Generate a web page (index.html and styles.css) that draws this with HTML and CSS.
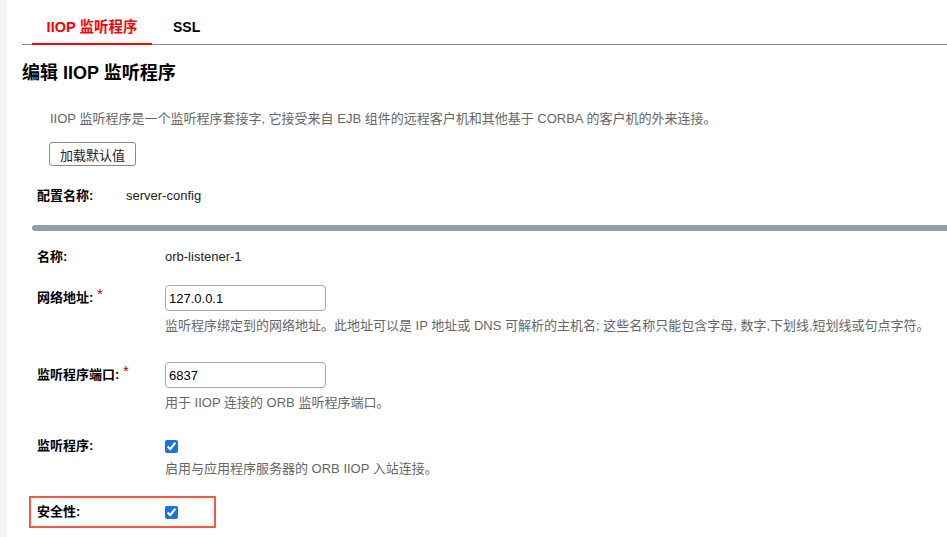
FILE: index.html
```html
<!DOCTYPE html>
<html lang="zh-CN">
<head>
    <meta charset="UTF-8">
    <meta name="viewport" content="width=device-width, initial-scale=1.0">
    <title>编辑 IIOP 监听程序</title>
    <link rel="stylesheet" href="styles.css">
</head>
<body>
    <div class="tabs">
        <span class="tab activo">IIOP 监听程序</span>
        <span class="tab">SSL</span>
    </div>

    <h1>编辑 IIOP 监听程序</h1>

    <p class="descripcion">IIOP 监听程序是一个监听程序套接字, 它接受来自 EJB 组件的远程客户机和其他基于 CORBA 的客户机的外来连接。</p>
    <button type="button" class="btn">加载默认值</button>

    <div class="config">
        <span class="etiqueta-config">配置名称:</span>
        <span>server-config</span>
    </div>

    <div class="barra"></div>

    <form class="formulario">
        <div class="fila fila-texto">
            <label>名称:</label>
            <span class="valor">orb-listener-1</span>
        </div>

        <div class="fila fila-campo">
            <label for="direccion">网络地址: <span class="req">*</span></label>
            <div class="valor">
                <input type="text" id="direccion" value="127.0.0.1">
                <div class="ayuda">监听程序绑定到的网络地址。此地址可以是 IP 地址或 DNS 可解析的主机名; 这些名称只能包含字母, 数字,下划线,短划线或句点字符。</div>
            </div>
        </div>

        <div class="fila fila-campo puerto">
            <label for="puerto">监听程序端口: <span class="req">*</span></label>
            <div class="valor">
                <input type="text" id="puerto" value="6837">
                <div class="ayuda">用于 IIOP 连接的 ORB 监听程序端口。</div>
            </div>
        </div>

        <div class="fila fila-check">
            <label for="listener">监听程序:</label>
            <div class="valor">
                <input type="checkbox" id="listener" checked>
                <div class="ayuda">启用与应用程序服务器的 ORB IIOP 入站连接。</div>
            </div>
        </div>

        <div class="fila fila-check destacado">
            <label for="seguridad">安全性:</label>
            <div class="valor">
                <input type="checkbox" id="seguridad" checked>
            </div>
        </div>
    </form>
</body>
</html>
```

FILE: styles.css
```css
body {
    margin: 0;
    font-family: "Liberation Sans", "Noto Sans CJK SC", Arial, sans-serif;
    font-size: 13px;
    color: #222;
    background: linear-gradient(to right, #f4f4f4 7px, #fff 7px);
    overflow: hidden;
}
.tabs {
    display: flex;
    margin-left: 22px;
    height: 44px;
    border-bottom: 1px solid #7d8e99;
}
.tab {
    box-sizing: border-box;
    height: 45px;
    padding: 17px 21px 0;
    line-height: 20px;
    font-size: 14px;
    font-weight: bold;
    color: #000;
    white-space: nowrap;
}
.tab.activo {
    margin-left: 10px;
    width: 120px;
    padding: 17px 0 0;
    text-align: center;
    font-size: 14.5px;
    color: #f00;
    border-bottom: 2px solid #f00;
}
h1 {
    margin: 16px 0 0 22px;
    font-size: 18px;
    line-height: 24px;
    color: #000;
}
.descripcion {
    margin: 25px 0 0 50px;
    line-height: 18px;
    color: #666;
}
.btn {
    display: block;
    margin: 14px 0 0 49px;
    width: 87px;
    height: 24px;
    padding: 0;
    font-family: inherit;
    font-size: 13px;
    color: #222;
    background: #fff;
    border: 1px solid #8a8a8a;
    border-radius: 3px;
}
.config {
    display: flex;
    margin: 21px 0 0 37px;
    line-height: 18px;
}
.etiqueta-config {
    width: 89px;
    font-weight: bold;
    color: #000;
}
.barra {
    margin: 20px 0 0 32px;
    height: 6px;
    background: #939fa8;
    border-radius: 3px 0 0 3px;
}
.formulario {
    margin: 0 0 0 37px;
}
.fila {
    display: flex;
    align-items: flex-start;
}
.fila label {
    width: 128px;
    flex-shrink: 0;
    font-weight: bold;
    color: #000;
}
.req {
    font-size: 15px;
    font-weight: normal;
    line-height: 0;
    vertical-align: 3px;
    color: #c00;
}
.fila-texto {
    margin-top: 17px;
    line-height: 18px;
}
.fila-campo {
    margin-top: 19px;
}
.fila-campo.puerto {
    margin-top: 27px;
}
.fila-campo label {
    line-height: 25px;
}
input[type="text"] {
    box-sizing: border-box;
    display: block;
    width: 161px;
    height: 26px;
    padding: 0 3px;
    font-family: inherit;
    font-size: 13px;
    color: #000;
    border: 1px solid #aaa;
    border-radius: 4px;
}
.ayuda {
    margin-top: 6px;
    line-height: 18px;
    color: #666;
    white-space: nowrap;
}
.fila-check {
    margin-top: 25px;
}
.fila-check label {
    line-height: 18px;
}
input[type="checkbox"] {
    display: block;
    width: 13px;
    height: 13px;
    margin: 3px 0 0;
    accent-color: #1473e6;
}
.fila-check .ayuda {
    margin-top: 7px;
}
.destacado {
    margin: 18px 0 0 -8px;
    width: 177px;
    height: 28px;
    padding-left: 6px;
    border: 2px solid #f25a45;
    align-items: center;
}
.destacado label {
    line-height: 28px;
}
.destacado input[type="checkbox"] {
    margin: 0;
}
```
